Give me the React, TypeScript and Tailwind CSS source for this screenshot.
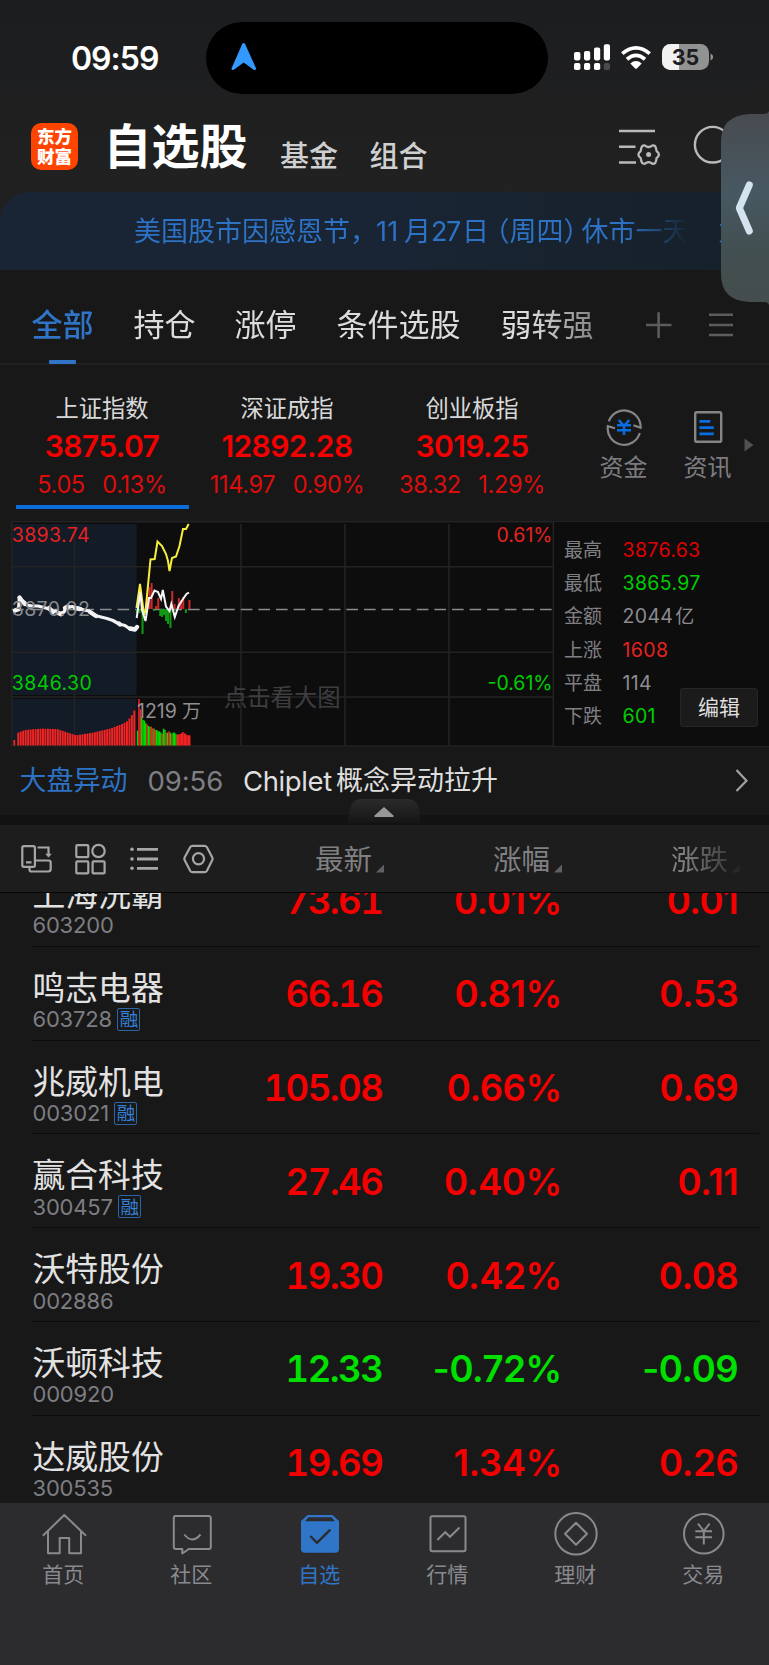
import React from "react";

const RED = "#f40000";
const GREEN = "#00dc00";

type Stock = {
  name: string;
  code: string;
  margin?: boolean;
  price: string;
  pct: string;
  diff: string;
  down?: boolean;
};

const stocks: Stock[] = [
  { name: "上海洗霸", code: "603200", price: "73.61", pct: "0.01%", diff: "0.01" },
  { name: "鸣志电器", code: "603728", margin: true, price: "66.16", pct: "0.81%", diff: "0.53" },
  { name: "兆威机电", code: "003021", margin: true, price: "105.08", pct: "0.66%", diff: "0.69" },
  { name: "赢合科技", code: "300457", margin: true, price: "27.46", pct: "0.40%", diff: "0.11" },
  { name: "沃特股份", code: "002886", price: "19.30", pct: "0.42%", diff: "0.08" },
  { name: "沃顿科技", code: "000920", price: "12.33", pct: "-0.72%", diff: "-0.09", down: true },
  { name: "达威股份", code: "300535", price: "19.69", pct: "1.34%", diff: "0.26" },
];

const indices = [
  { name: "上证指数", value: "3875.07", diff: "5.05", pct: "0.13%", active: true },
  { name: "深证成指", value: "12892.28", diff: "114.97", pct: "0.90%" },
  { name: "创业板指", value: "3019.25", diff: "38.32", pct: "1.29%" },
];

const stats = [
  { label: "最高", value: "3876.63", cls: "text-[#e00000]" },
  { label: "最低", value: "3865.97", cls: "text-[#00cd00]" },
  { label: "金额", value: "2044", unit: "亿", cls: "text-[#8b8b90]" },
  { label: "上涨", value: "1608", cls: "text-[#e32222]" },
  { label: "平盘", value: "114", cls: "text-[#8b8b90]" },
  { label: "下跌", value: "601", cls: "text-[#00cd00]" },
];

function StatusBar() {
  return (
    <div className="flex h-[114px] items-start">
      <div className="mt-[38.5px] w-[206px] pl-[71px] text-[32px] font-semibold leading-[40px] tracking-[-1px] text-white">
        09:59
      </div>
      <div className="mt-[22px] flex h-[72px] w-[342px] items-start rounded-full bg-black pl-[25px] pt-[20px]">
        <svg width="26" height="29" viewBox="231 42 26 29">
          <path d="M242.3 43.8Q243.7 42 245 43.8L256 68.2Q256.2 70.8 253.6 69.8L243.7 62.5L233.8 69.8Q231.2 70.8 231.6 68.2Z" fill="#3399ff" />
        </svg>
      </div>
      <svg className="ml-[24px] mt-[42px]" width="146" height="30" viewBox="572 42 146 30">
        <g fill="#fff">
          <rect x="574" y="52" width="6.4" height="8.4" rx="1.8" />
          <rect x="584" y="51" width="6.2" height="9.4" rx="1.8" />
          <rect x="594" y="47.6" width="6.2" height="12.8" rx="1.8" />
          <rect x="603.8" y="44.2" width="6.2" height="16.2" rx="1.8" />
          <rect x="574" y="63" width="6.4" height="7" rx="1.8" />
          <rect x="584" y="63" width="6.2" height="7" rx="1.8" />
          <rect x="594" y="63" width="6.2" height="7" rx="1.8" />
        </g>
        <rect x="603.8" y="63" width="6.2" height="7" rx="1.8" fill="#4a4a4c" />
        <g fill="none" stroke="#fff" strokeWidth="3.8">
          <path d="M622.3 53.6Q636 42.2 649.7 53.6" />
          <path d="M627 59.2Q636 51.6 645 59.2" />
        </g>
        <path d="M630.3 63.5Q636 58.6 641.7 63.5L636.9 68.4Q636 69.3 635.1 68.4Z" fill="#fff" />
        <rect x="662" y="44" width="47" height="26" rx="8.5" fill="#929293" />
        <path d="M679 44H670.5A8.5 8.5 0 0 0 662 52.5V61.5A8.5 8.5 0 0 0 670.5 70H679Z" fill="#f2f2f2" />
        <path d="M710.5 53.5Q713.2 54.5 713.2 57T710.5 60.5Z" fill="#929293" />
        <text x="685.5" y="64.7" textAnchor="middle" fontSize="21.5" fontWeight="700" fill="#1c1c1e">35</text>
      </svg>
    </div>
  );
}

function Header() {
  return (
    <div className="flex h-[78px] items-start">
      <div className="ml-[31px] mt-[9px] flex h-[47px] w-[47px] flex-col items-center justify-center rounded-[10px] bg-[#ff4400] text-[17.5px] font-black leading-[19.5px] text-white">
        <span>东方</span>
        <span>财富</span>
      </div>
      <div className="ml-[25.5px] mt-[3px] w-[148.5px] whitespace-nowrap text-[48px] font-bold leading-[60px] text-white">自选股</div>
      <div className="ml-[28px] mt-[23px] w-[60px] text-[29px] font-medium leading-[40px] text-[#cfcfcf]">基金</div>
      <div className="ml-[29.5px] mt-[23px] w-[60px] text-[29px] font-medium leading-[40px] text-[#cfcfcf]">组合</div>
      <svg className="ml-[187.5px] mt-[10px]" width="44" height="44" viewBox="617 124 44 44" fill="none" stroke="#b9b9b9" strokeWidth="2.6">
        <path d="M619 131H655M619 146.7H635.5M619 162.5H636" />
        <path
          d="M658.9 154.6Q658.7 156.8 656.6 158Q656.3 161 655.2 163Q653.2 164.6 651.2 163Q648.6 161.4 646 163Q644 164.6 642.2 163Q640.9 161 640.7 158Q638.6 156.8 638.4 154.6Q638.6 152.4 640.7 151.2Q640.9 148.2 642.2 146.2Q644 144.6 646 146.2Q648.6 147.8 651.2 146.2Q653.2 144.6 655.2 146.2Q656.3 148.2 656.6 151.2Q658.7 152.4 658.9 154.6Z"
          strokeWidth="2.3"
          strokeLinejoin="round"
        />
        <circle cx="648.6" cy="154.6" r="2.5" fill="#b9b9b9" stroke="none" />
      </svg>
      <svg className="ml-[32px] mt-[10px]" width="42" height="44" viewBox="692 124 42 44" fill="none" stroke="#b9b9b9" strokeWidth="2.4">
        <circle cx="711.7" cy="144.7" r="17.8" />
      </svg>
    </div>
  );
}

function Banner() {
  return (
    <div className="h-[78px] bg-[#202020]">
      <div className="flex h-[78px] items-center overflow-hidden rounded-tl-[30px] bg-linear-to-r from-[#192535] via-[#192534] to-[#162029] pl-[134px] pt-[2px] text-[27px] leading-[40px] whitespace-nowrap text-[#2d72c4]">
        <div className="flex w-[560px] shrink-0 mask-[linear-gradient(to_right,#000_490px,transparent_555px)]">
          <span className="w-[242px] shrink-0">美国股市因感恩节，</span>
          <span className="w-[28px] shrink-0 tracking-[0.2px]">11</span>
          <span className="w-[27px] shrink-0">月</span>
          <span className="w-[31px] shrink-0 tracking-[-1.4px]">27</span>
          <span className="w-[34px] shrink-0">日</span>
          <span className="w-[13.5px] shrink-0 [font-feature-settings:'halt']">（</span>
          <span className="w-[54px] shrink-0">周四</span>
          <span className="w-[18px] shrink-0 [font-feature-settings:'halt']">）</span>
          <span className="shrink-0">休市一天</span>
        </div>
        <span className="ml-[24px]">为</span>
      </div>
    </div>
  );
}

function Tabs() {
  return (
    <div className="flex h-[95px] items-start border-b-2 border-[#202020] text-[31px] leading-[40px] text-[#dcdcdc]">
      <div className="flex h-[95px] w-[628px] items-start overflow-hidden whitespace-nowrap pl-[31.5px] pt-[35px] mask-[linear-gradient(to_right,#000_530px,transparent_670px)]">
        <div className="flex w-[102px] flex-col font-medium text-[#2f74c6]">
          <span>全部</span>
          <span className="ml-[17.5px] mt-[15px] h-[4px] w-[27px] rounded-[1px] bg-[#2f74c6]" />
        </div>
        <span className="w-[101px]">持仓</span>
        <span className="w-[102px]">涨停</span>
        <span className="w-[164px]">条件选股</span>
        <span>弱转强</span>
      </div>
      <svg className="ml-[16px] mt-[40px]" width="30" height="30" viewBox="644 310 30 30" stroke="#5c5c5c" strokeWidth="2.6">
        <path d="M646 325H671.5M658.6 312.3V338" />
      </svg>
      <svg className="ml-[33px] mt-[40px]" width="28" height="30" viewBox="707 310 28 30" stroke="#5c5c5c" strokeWidth="2.6">
        <path d="M709 314.7H733M709 325H733M709 335H733" />
      </svg>
    </div>
  );
}

function IndexPanel() {
  return (
    <div className="flex h-[156px] pl-[9.5px]">
      {indices.map((it) => (
        <div key={it.name} className="flex w-[185px] flex-col items-center pt-[29px]">
          <div className="text-[23.3px] leading-[30px] text-[#d8d8d8]">{it.name}</div>
          <div className="mt-[7px] text-[30px] font-semibold leading-[30px] tracking-[-0.6px] text-[#f40000]">{it.value}</div>
          <div className="mt-[10.5px] flex gap-[17.5px] text-[23.6px] leading-[26px] tracking-[-0.4px] text-[#dc0d0d]">
            <span>{it.diff}</span>
            <span>{it.pct}</span>
          </div>
          {it.active && <div className="mt-[7.5px] h-[4px] w-[173px] bg-[#0b6cdc]" />}
        </div>
      ))}
      <div className="ml-[17px] flex w-[84px] flex-col items-center pt-[43px] text-[24px] leading-[32px] text-[#7c7c80]">
        <svg width="38" height="38" viewBox="605 408 38 38" fill="none" strokeWidth="2.2">
          <g stroke="#858587">
            <path d="M608.8 421.3A16.4 16.4 0 0 1 640.6 427.8L633.5 425.3" />
            <path d="M639.8 433A16.4 16.4 0 0 1 607.8 426.2L615 428.3" />
          </g>
          <path d="M618.8 420L624 426L629.2 420M617 425.3H631M617 430.3H631M624 426V435" stroke="#0b6ce0" strokeWidth="2.6" />
        </svg>
        <span className="mt-[6px]">资金</span>
      </div>
      <div className="flex w-[84px] flex-col items-center pt-[43px] text-[24px] leading-[32px] text-[#7c7c80]">
        <svg width="38" height="38" viewBox="689 408 38 38" fill="none" strokeWidth="2.4">
          <rect x="695.2" y="412.2" width="26" height="29.6" rx="1.6" stroke="#858587" />
          <path d="M699.4 421.4H710.3M699.4 427.6H713.8M699.4 433.8H713.8" stroke="#0b6ce0" strokeWidth="2.8" />
        </svg>
        <span className="mt-[6px]">资讯</span>
      </div>
      <svg className="-ml-[5.5px] mt-[73px]" width="12" height="14" viewBox="744 438 12 14">
        <path d="M744.5 438.5L753.5 445L744.5 451.5Z" fill="#515151" />
      </svg>
    </div>
  );
}

const volumeProfile: [number, number][] = [
  [17, 668], [24, 660], [40, 656], [56, 657], [66, 667], [75, 676], [92, 668], [110, 655], [122, 641], [127, 632], [131, 615], [135, 593],
];

function profileTop(x: number) {
  for (let i = 1; i < volumeProfile.length; i++) {
    const [x0, y0] = volumeProfile[i - 1];
    const [x1, y1] = volumeProfile[i];
    if (x <= x1) return 510 + (y0 + ((y1 - y0) * (x - x0)) / (x1 - x0)) / 3;
  }
  return 708;
}

const earlyBars = Array.from({ length: 48 }, (_, i) => 17.3 + i * 2.47).filter((x) => x < 135.5);

const lateBars = (
  "g662 r567 r598 g620 g630 g632 g640 r643 g648 g650 r650 r655 g656 r660 g660 g664 g664 g668 r672 g656 g660 r668 g668 r664 g668 r672 g668 g668 g672 r674 r673 r672 r670 r666 r670 r671 r675 r676 r676"
).split(" ");

const flowBars: [number, number, string][] = [
  [137, 4, GREEN], [139.5, 4, GREEN], [142.5, 25, GREEN], [144.5, 5, GREEN], [147.5, -12, RED], [149.5, -22, RED], [151.6, -26, RED],
  [156, -3, RED], [158.2, -11, RED], [160.2, 7, GREEN], [162, 8, GREEN], [164, 6, GREEN], [166, 12, GREEN], [168, 15, GREEN],
  [170.4, 19, GREEN], [154, 2, GREEN], [172.2, -18, RED], [174.5, -5, RED], [176.5, 2, GREEN], [178.8, -11, RED], [181, -9, RED], [183.2, -12, RED], [185.8, 4, GREEN], [189.4, -9, RED],
];

function Chart() {
  return (
    <svg className="block h-[226px] w-[554px] shrink-0" width="554" height="226" viewBox="0 521 554 226">
      <rect x="11" y="521" width="543" height="226" fill="#0d0d0d" />
      <rect x="12" y="524" width="124.7" height="171" fill="#121b26" />
      <rect x="12" y="699" width="124.7" height="47" fill="#121b26" />
      <g stroke="#232323" strokeWidth="1.6">
        <path d="M11 521.8H554M12 566.7H553M12 652.3H553M12 697H553M11 746H554" />
        <path d="M11.7 521V747M74.5 524V745M241 524V745M345 524V745M449 524V745M553.4 521V747" />
      </g>
      <text x="224" y="705.5" fontSize="23.3" fill="#3e3e40">点击看大图</text>
      <path d="M12 609.5H553" stroke="#8c8c90" strokeWidth="1.3" strokeDasharray="11.6 6" />
      {flowBars.map(([x, h, c], i) => (
        <rect key={i} x={x - 0.95} y={h < 0 ? 609 + h : 609} width="2" height={Math.abs(h)} fill={c === RED ? "#cd2929" : "#119a11"} />
      ))}
      <rect x="13.4" y="740" width="1.8" height="5.5" fill="#f62323" />
      <g fill="#f62323">
        {earlyBars.map((x) => (
          <rect key={x} x={x} y={profileTop(x)} width="1.95" height={745.5 - profileTop(x)} />
        ))}
      </g>
      {lateBars.map((b, i) => {
        const y = 510 + Number(b.slice(1)) / 3;
        return <rect key={i} x={136.8 + i * 1.372} y={y} width="1.5" height={745.5 - y} fill={b[0] === "r" ? "#f62323" : "#00dc00"} />;
      })}
      <path
        d="M15.5 610.5L18.5 609.5L19.3 598L21 600L24 602L27 605L32 606L38 606L44 607.5L49 609L52 611.5L56 611L60 613.5L64 612L66 608L72 606.5L78 608L84 610L89 611L95 615.5L101 617L107 618.5L113 620.5L119 624L125 625.5L130 629L135 629L137 627"
        fill="none" stroke="#f3f3f5" strokeWidth="3.2" strokeLinejoin="round" strokeLinecap="round"
      />
      <path
        d="M15 610.5L19 609M19.5 597.5L22 601L25 604M49 608L53 612M58 613L61 614.2M65 608L68 606.5M75 608L80 609M90 612L96 616M119 623.5L120 624.5M130 628.5L135 629.5L137 627"
        fill="none" stroke="#f3f3f5" strokeWidth="4.4" strokeLinejoin="round" strokeLinecap="round"
      />
      <text x="11.8" y="615.5" fontSize="19.5" letterSpacing="0.35" fill="#8a8a8c">3870.02</text>
      <path d="M136.5 608L140 584L144 615L145.5 611L150.5 559.5L154.7 559L157.5 541.5L162 546L166 554L168 561L169.5 571L172 558L176 556.5L179.5 546L183 529L186 529L188.7 524" fill="none" stroke="#f6ef3e" strokeWidth="2" />
      <path d="M136.7 618L140.3 592L142 610L145.5 621L149 598L151 598L154.5 590.5L158 592L161 599L162.8 590L166 606.5L169.5 611L171.3 604L174.8 617L178.5 606L183 599L186.5 594L189 592.5" fill="none" stroke="#f5f5f5" strokeWidth="2" />
      <g fontSize="19.5">
        <text x="11.8" y="541.5" letterSpacing="0.35" fill="#e52222">3893.74</text>
        <text x="11.8" y="690" letterSpacing="0.4" fill="#00cd00">3846.30</text>
        <text x="552.5" y="541.5" textAnchor="end" fill="#e52222">0.61%</text>
        <text x="552.5" y="690" textAnchor="end" fill="#00cd00">-0.61%</text>
        <text x="137" y="717.5" fill="#8f8f93">1219</text>
        <text x="182" y="717.5" fontSize="19" fill="#8f8f93">万</text>
      </g>
    </svg>
  );
}

function MarketPanel() {
  return (
    <div className="flex h-[226px]">
      <Chart />
      <div className="relative flex grow flex-col border-t border-b border-[#222] bg-[#0d0d0d] pl-[10px] pt-[12px] text-[19px] leading-[33.2px] text-[#808084]">
        {stats.map((s) => (
          <div key={s.label} className="flex">
            <span className="w-[58.5px]">{s.label}</span>
            <span className={"text-[19.5px] tracking-[0.35px] " + s.cls}>
              {s.value}
              {s.unit && <span className="ml-[2px] text-[19px]">{s.unit}</span>}
            </span>
          </div>
        ))}
        <div className="absolute right-[11px] bottom-[19px] flex h-[39px] w-[78px] items-center justify-center rounded-[3px] border border-[#262626] bg-[#1b1b1b] text-[21px] text-[#dedede]">
          编辑
        </div>
      </div>
    </div>
  );
}

function NewsRow() {
  return (
    <div className="relative flex h-[78px] items-start border-b-[10px] border-[#121212] pl-[19.5px] pt-[14px] text-[27px] leading-[40px]">
      <span className="w-[128px] text-[#2d72c4]">大盘异动</span>
      <span className="w-[95.5px] text-[27.5px] tracking-[-0.1px] text-[#7f7f84]">09:56</span>
      <span className="w-[93px] text-[27.5px] tracking-[-0.4px] text-[#dedede]">Chiplet</span>
      <span className="grow text-[#dedede]">概念异动拉升</span>
      <svg className="mt-[6px] mr-[19px]" width="16" height="26" viewBox="734 766 16 26" fill="none" stroke="#a2a2a2" strokeWidth="2.2">
        <path d="M736.5 769L746.5 779.7L736.5 790" />
      </svg>
      <svg className="absolute left-[346px] top-[52px]" width="76" height="26" viewBox="346 799 76 26">
        <defs>
          <linearGradient id="grip" x1="0" y1="0" x2="0" y2="1">
            <stop offset="0" stopColor="#2b2b2b" />
            <stop offset="1" stopColor="#151515" />
          </linearGradient>
        </defs>
        <path d="M347 823C350 815 349 811 351 806Q354 799 361 799H408Q415 799 418 806C420 811 419 815 421 823Z" fill="url(#grip)" />
        <path d="M384 807L393.5 815.5V817H374.5V815.5Z" fill="#989898" />
      </svg>
    </div>
  );
}

function Corner() {
  return (
    <svg width="8" height="9" viewBox="0 0 8 9" className="mt-[18px] ml-[3.5px] shrink-0">
      <path d="M8 0.5V8.5H0Z" fill="#606064" />
    </svg>
  );
}

function ListToolbar() {
  return (
    <div className="flex h-[68px] items-center border-b border-[#050505] bg-[#1d1d1d] text-[28px] leading-[40px] text-[#808082]">
      <svg className="ml-[20px]" width="198" height="34" viewBox="20 842 198 34" fill="none" stroke="#a6a6a8" strokeWidth="2.2">
        <rect x="22.3" y="846.2" width="12.6" height="20.6" rx="1.6" />
        <path d="M26 862.3H31.5M37.5 847.5H48.5V855M35 860.5H48.5Q50.7 860.5 50.7 862.7V869Q50.7 871.5 48.2 871.5H31.5Q29.5 871.5 29.5 869.5V867" />
        <path d="M45.8 854H51.2L48.5 857.2Z" fill="#a6a6a8" strokeWidth="0.6" />
        <rect x="76.3" y="845.2" width="12" height="12" rx="1" />
        <circle cx="98.5" cy="851" r="6.2" />
        <rect x="76.3" y="861.4" width="12" height="12" rx="1" />
        <rect x="92.6" y="861.4" width="12" height="12" rx="1" />
        <path d="M137 849.3H158M137 859H158M137 868.3H158" strokeWidth="2.8" />
        <g fill="#a6a6a8" stroke="none">
          <circle cx="132" cy="849.3" r="1.8" />
          <circle cx="132" cy="859" r="1.8" />
          <circle cx="132" cy="868.3" r="1.8" />
        </g>
        <path d="M192.5 845.8H204.5Q206 845.8 206.8 847L212.3 857.5Q213 858.8 212.3 860L206.8 871Q206 872.2 204.5 872.2H192.5Q191 872.2 190.3 871L184.6 860Q184 858.8 184.6 857.5L190.3 847Q191 845.8 192.5 845.8Z" />
        <circle cx="198.5" cy="858.8" r="5.6" />
      </svg>
      <div className="ml-[97px] flex w-[178px] items-center pt-[2px] text-[28.5px]">最新<Corner /></div>
      <div className="flex w-[178px] items-center pt-[2px] text-[28.5px]">涨幅<Corner /></div>
      <div className="flex w-[76px] items-center pt-[2px] text-[28.5px] mask-[linear-gradient(to_right,#000_15px,transparent_76px)]">涨跌<Corner /></div>
    </div>
  );
}

function StockRow({ s }: { s: Stock }) {
  const tone = s.down ? "text-[#00e000]" : "text-[#f40000]";
  return (
    <div className="ml-[32px] mr-[10px] flex h-[93.8px] shrink-0 items-start border-b border-[#0c0c0c]">
      <div className="w-[171px] pl-[0.5px] pt-[20px]">
        <div className="text-[32.8px] leading-[42px] text-[#e2e2e2]">{s.name}</div>
        <div className="-mt-[1.6px] flex h-[24px] items-center text-[22px] leading-[24px] tracking-[-0.2px] text-[#7d7d82]">
          {s.code}
          {s.margin && (
            <span className="ml-[5.5px] flex h-[23px] w-[23px] items-center justify-center rounded-[2px] border-[1.5px] border-[#2c66a8] text-[18.5px] leading-[20px] tracking-normal text-[#3580d8]">
              融
            </span>
          )}
        </div>
      </div>
      <div className={"flex pt-[26.5px] text-right text-[36.5px] font-semibold leading-[42px] tracking-[-0.4px] " + tone}>
        <span className="w-[179.3px] tabular-nums tracking-[-1.5px]">{s.price}</span>
        <span className="w-[179.5px]">{s.pct}</span>
        <span className="w-[176.5px]">{s.diff}</span>
      </div>
    </div>
  );
}

function BottomNav() {
  const items = [
    {
      label: "首页",
      icon: (
        <path d="M42.8 1535.8L64.3 1515L86 1535.8M48 1531V1553.2H59.7V1538H69.2V1553.2H81V1531" strokeLinejoin="round" />
      ),
      box: "40 1510 48 48",
    },
    {
      label: "社区",
      icon: (
        <path d="M175.5 1516H208.5Q210.8 1516 210.8 1518.3V1547Q210.8 1549 208.7 1549H188.8L182.3 1553.5V1549H176Q173.8 1549 173.8 1547V1518Q173.8 1516 175.5 1516M184.3 1534.5Q192.2 1544.5 200.5 1534.5" strokeLinejoin="round" />
      ),
      box: "168 1510 48 48",
    },
    {
      label: "自选",
      active: true,
      icon: (
        <>
          <path d="M301 1521L307.5 1515H332.5L339 1521V1549Q339 1552.7 335.3 1552.7H304.7Q301 1552.7 301 1549Z" fill="#2f76c8" stroke="none" />
          <path d="M305 1521.2L308.5 1517.3H331.5L335 1521.2Z" fill="#2c2c2e" stroke="none" />
          <path d="M310.3 1536L317 1542.8L330.3 1529.6" stroke="#2c2c2e" strokeWidth="2.4" />
        </>
      ),
      box: "296 1510 48 48",
    },
    {
      label: "行情",
      icon: (
        <>
          <rect x="430.5" y="1516.2" width="35" height="35" rx="1.6" />
          <path d="M437.3 1540L445.3 1532.2L450 1536.8L459.5 1527.5" />
        </>
      ),
      box: "424 1510 48 48",
    },
    {
      label: "理财",
      icon: (
        <>
          <circle cx="576" cy="1533.8" r="20.7" />
          <path d="M576 1522.8L587 1533.8L576 1544.8L565 1533.8Z" strokeLinejoin="round" />
        </>
      ),
      box: "552 1510 48 48",
    },
    {
      label: "交易",
      icon: (
        <>
          <circle cx="703.8" cy="1533.8" r="19.8" />
          <path d="M698 1523.7L703.8 1531L709.6 1523.7M695.3 1531.2H712M695.3 1537.3H712M703.8 1531V1544.5" />
        </>
      ),
      box: "680 1510 48 48",
    },
  ];
  return (
    <div className="flex h-[162px] bg-[#2c2c2e]">
      {items.map((it) => (
        <div key={it.label} className={"flex w-[128px] shrink-0 flex-col items-center pt-[7px] text-[21px] leading-[30px] " + (it.active ? "text-[#2f76c8]" : "text-[#8a8a8e]")}>
          <svg width="48" height="48" viewBox={it.box} fill="none" stroke="#8a8a8e" strokeWidth="2">
            {it.icon}
          </svg>
          <span className="mt-[2px] pr-[1.5px]">{it.label}</span>
        </div>
      ))}
    </div>
  );
}

export default function App() {
  return (
    <div className="relative flex h-[1665px] w-[769px] flex-col overflow-hidden bg-[#181818] font-['Inter','Noto_Sans_CJK_SC',sans-serif]">
      <div className="bg-linear-to-b from-[#1c1d1f] to-[#212121]">
        <StatusBar />
        <Header />
      </div>
      <Banner />
      <Tabs />
      <IndexPanel />
      <MarketPanel />
      <NewsRow />
      <ListToolbar />
      <div className="flex h-[610px] shrink-0 flex-col overflow-hidden">
        <div className="-mt-[40px] flex flex-col">
          {stocks.map((s) => (
            <StockRow key={s.code} s={s} />
          ))}
        </div>
      </div>
      <BottomNav />
      <svg className="absolute right-0 top-[110px]" width="49" height="198" viewBox="720 110 49 198">
        <defs>
          <linearGradient id="drawer" x1="0" y1="0" x2="0" y2="1">
            <stop offset="0" stopColor="#484b50" />
            <stop offset="0.42" stopColor="#475861" />
            <stop offset="0.75" stopColor="#424f50" />
            <stop offset="1" stopColor="#454d4d" />
          </linearGradient>
        </defs>
        <path d="M769 111Q768 114 764 114H750Q721 115 721 142V274Q721 301 750 302H764Q768 302 769 305Z" fill="url(#drawer)" />
        <path d="M749.3 185L739.3 208L749.3 231" fill="none" stroke="#d5e3ef" strokeWidth="7" strokeLinecap="round" strokeLinejoin="round" />
      </svg>
    </div>
  );
}
